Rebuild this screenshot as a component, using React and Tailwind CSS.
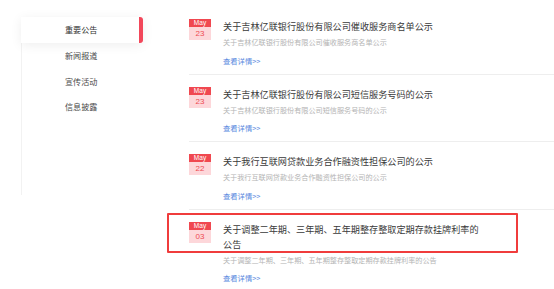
const menu = ["重要公告", "新闻报道", "宣传活动", "信息披露"];

const notices = [
    { month: "May", day: "23", title: "关于吉林亿联银行股份有限公司催收服务商名单公示" },
    { month: "May", day: "23", title: "关于吉林亿联银行股份有限公司短信服务号码的公示" },
    { month: "May", day: "22", title: "关于我行互联网贷款业务合作融资性担保公司的公示" },
    { month: "May", day: "03", title: "关于调整二年期、三年期、五年期整存整取定期存款挂牌利率的公告" },
];

function DateBadge({ month, day }) {
    return (
        <div className="w-[22px] shrink-0 text-center font-['Liberation_Sans',sans-serif]">
            <div className="h-[8px] bg-[#f04850] text-white text-[6.5px] leading-[8px]">{month}</div>
            <div className="h-[13px] bg-[#fdd7da] text-[#ee4a52] text-[8px] leading-[13px]">{day}</div>
        </div>
    );
}

function NoticeItem({ item }) {
    return (
        <div className="flex gap-[12px] pt-[12px] pb-[8px] border-b border-[#eeeeee]">
            <DateBadge month={item.month} day={item.day} />
            <div className="min-w-0">
                <h3 className="max-w-[259px] text-[9.15px] leading-[14.5px] text-[#3a3a3a]">{item.title}</h3>
                <p className="mt-[3.5px] text-[7.13px] leading-[10px] text-[#b4b4b4] whitespace-nowrap">{item.title}</p>
                <a className="block mt-[8.7px] text-[7.3px] leading-[10px] text-[#5b8ae0]">查看详情&gt;&gt;</a>
            </div>
        </div>
    );
}

export default function App() {
    return (
        <div className="relative w-[554px] h-[289px] overflow-hidden bg-white flex font-['Noto_Sans_CJK_SC',sans-serif]">
            {/* Sidebar */}
            <div className="ml-[21px] mt-[17px] w-[122px] shrink-0">
                <div className="relative h-[26px] bg-white shadow-[0_2px_12px_rgba(0,0,0,0.07)] pl-[44px] text-[8.1px] leading-[26px] text-[#333333]">
                    {menu[0]}
                    <span className="absolute right-0 top-0 h-full w-[4px] rounded-r-[3px] bg-[#f2475a]" />
                </div>
                <div className="h-[152px] border-l border-[#f2f2f2]">
                    {menu.slice(1).map((m) => (
                        <div key={m} className="h-[25.5px] pl-[43px] text-[8.1px] leading-[25.5px] text-[#4a4a4a]">
                            {m}
                        </div>
                    ))}
                </div>
            </div>

            {/* Notice list */}
            <div className="ml-[46px] flex-1 pt-[7px]">
                {notices.map((n, i) => (
                    <NoticeItem key={i} item={n} />
                ))}
            </div>

            {/* Highlight annotation */}
            <div className="absolute left-[167px] top-[213px] w-[351px] h-[40px] border-2 border-[#f03c3c] rounded-[1px]" />
        </div>
    );
}
